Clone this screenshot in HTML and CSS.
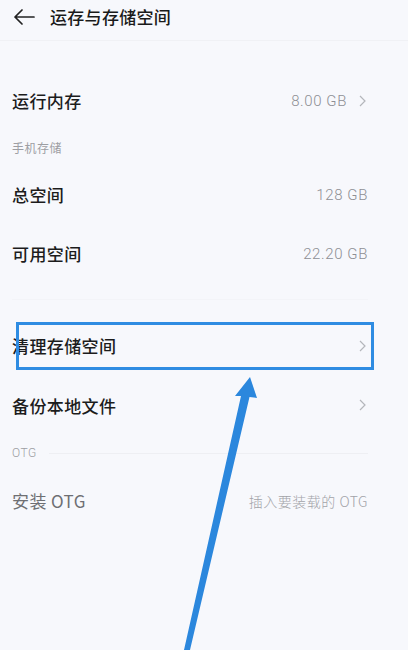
FILE: index.html
```html
<!DOCTYPE html>
<html lang="zh">
<head>
<meta charset="utf-8">
<link rel="stylesheet" href="styles.css">
</head>
<body>
<div class="page">
  <header class="header">
    <svg class="back" width="22" height="16" viewBox="0 0 22 16"><path d="M9 1 L2 8 L9 15 M2 8 H21" fill="none" stroke="#222" stroke-width="1.7" stroke-linecap="round" stroke-linejoin="round"/></svg>
    <span class="title">运存与存储空间</span>
  </header>
  <div class="divider top"></div>

  <div class="row first">
    <span class="label">运行内存</span>
    <span class="value">8.00 GB<svg class="chev" width="7" height="12" viewBox="0 0 7 12"><path d="M1 1 L6 6 L1 11" fill="none" stroke="#b4b6bb" stroke-width="1.2"/></svg></span>
  </div>
  <div class="section">手机存储</div>
  <div class="row">
    <span class="label">总空间</span>
    <span class="value plain">128 GB</span>
  </div>
  <div class="row">
    <span class="label">可用空间</span>
    <span class="value plain">22.20 GB</span>
  </div>
  <div class="divider mid"></div>

  <div class="row clean">
    <span class="label">清理存储空间</span>
    <span class="value"><svg class="chev" width="7" height="12" viewBox="0 0 7 12"><path d="M1 1 L6 6 L1 11" fill="none" stroke="#b4b6bb" stroke-width="1.2"/></svg></span>
  </div>
  <div class="row tall">
    <span class="label">备份本地文件</span>
    <span class="value"><svg class="chev" width="7" height="12" viewBox="0 0 7 12"><path d="M1 1 L6 6 L1 11" fill="none" stroke="#b4b6bb" stroke-width="1.2"/></svg></span>
  </div>
  <div class="section otg"><span>OTG</span><span class="line"></span></div>
  <div class="row">
    <span class="label dim">安装 OTG</span>
    <span class="value plain light">插入要装载的 OTG</span>
  </div>

  <div class="highlight"></div>
  <svg class="arrow" width="408" height="650" viewBox="0 0 408 650">
    <polygon points="250,377 257,398 249.5,397 190,650 184,650 241,396 235,396" fill="#2b87dd"/>
  </svg>
</div>
</body>
</html>
```
FILE: styles.css
```css
html, body {
  margin: 0;
  padding: 0;
  background: #f7f8fc;
}
.page {
  position: relative;
  width: 408px;
  height: 650px;
  overflow: hidden;
  font-family: "Noto Sans CJK SC", "Roboto", sans-serif;
  color: #1f1f1f;
}
.header {
  height: 33px;
  display: flex;
  align-items: center;
  padding-left: 13px;
}
.back {
  display: block;
}
.title {
  margin-left: 15px;
  font-size: 17px;
  font-weight: 500;
  letter-spacing: 0.3px;
  color: #1a1a1a;
}
.divider {
  height: 1px;
  background: #f0f1f5;
}
.divider.top {
  margin-top: 7px;
}
.divider.mid {
  margin: 16px 40px 0 12px;
  background: #f3f4f8;
}
.row {
  height: 59px;
  display: flex;
  align-items: center;
  justify-content: space-between;
  padding: 0 40px 0 12px;
}
.row.tall {
  height: 60px;
}
.row.first {
  margin-top: 30px;
}
.row.clean {
  margin-top: 16px;
}
.label {
  font-size: 17px;
  font-weight: 500;
  letter-spacing: 0.4px;
  color: #1c1c1c;
}
.label.dim {
  font-weight: 400;
  color: #6e6f73;
}
.value {
  display: flex;
  align-items: center;
  font-family: "Roboto", "Noto Sans CJK SC", sans-serif;
  font-weight: 300;
  font-size: 15px;
  color: #8e8f94;
  letter-spacing: 0.6px;
}
.value .chev {
  margin-left: 12px;
  margin-right: 2px;
}
.value.light {
  font-family: "Noto Sans CJK SC", "Roboto", sans-serif;
  font-size: 14px;
  color: #a2a3a8;
  letter-spacing: 0.5px;
}
.section {
  height: 35px;
  display: flex;
  align-items: center;
  padding: 0 40px 0 12px;
  font-size: 12px;
  color: #9d9ea3;
  letter-spacing: 0.5px;
}
.section.otg {
  height: 36px;
  font-family: "Roboto", sans-serif;
  font-weight: 300;
}
.section .line {
  flex: 1;
  height: 1px;
  margin-left: 12px;
  background: #eeeff3;
}
.highlight {
  position: absolute;
  left: 16px;
  top: 322px;
  width: 352px;
  height: 42px;
  border: 3px solid #2f8ce2;
}
.arrow {
  position: absolute;
  left: 0;
  top: 0;
  pointer-events: none;
}
```
